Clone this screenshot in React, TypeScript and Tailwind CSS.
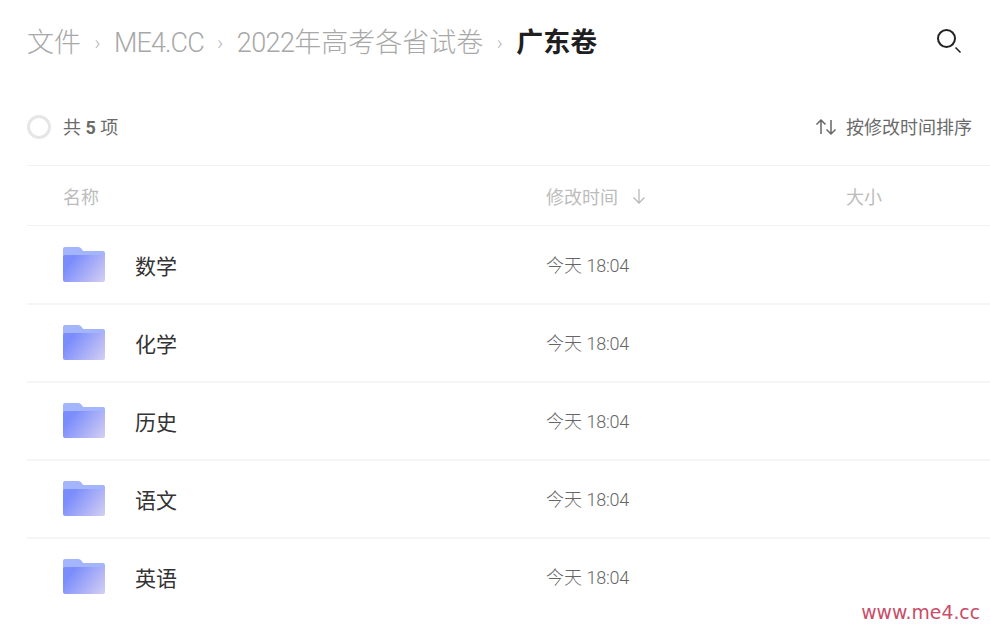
import React from "react";

const folders = ["数学", "化学", "历史", "语文", "英语"];

const FolderIcon = ({ id }: { id: string }) => (
  <svg width="42" height="36" viewBox="0 0 42 36" fill="none">
    <defs>
      <linearGradient id={`body-${id}`} x1="0" y1="0.35" x2="1" y2="0.85">
        <stop offset="0.1" stopColor="#7B8DFB" />
        <stop offset="1" stopColor="#CFCBF3" />
      </linearGradient>
    </defs>
    <path
      d="M0 2a2 2 0 0 1 2-2h13c2 0 3 1 4 2.500c.6 1 1.400 1.500 2.500 1.500H40a2 2 0 0 1 2 2v6H0z"
      fill="#A3B5FC"
    />
    <path
      d="M0 10a2 2 0 0 1 2-2h38a2 2 0 0 1 2 2V33a2 2 0 0 1-2 2H2a2 2 0 0 1-2-2z"
      fill={`url(#body-${id})`}
    />
  </svg>
);

const Sep = () => <span className="w-[33px] text-center text-[20px] font-light text-[#b8b8b8]">›</span>;

export default function App() {
  return (
    <div
      className="relative h-[628px] w-[990px] overflow-hidden bg-white pl-[27px]"
      style={{ fontFamily: 'Roboto, "Noto Sans CJK SC", sans-serif' }}
    >
      {/* Header */}
      <div className="flex h-[85px] items-center justify-between pr-[27px]">
        <div className="flex items-center text-[27px] font-light leading-[36px] text-[#a8a8a8]">
          <span>文件</span>
          <Sep />
          <span className="tracking-[-0.9px]">ME4.CC</span>
          <Sep />
          <span>
            <span className="tracking-[-0.6px]">2022</span>年高考各省试卷
          </span>
          <Sep />
          <span className="font-bold text-[#1f1f1f]">广东卷</span>
        </div>
        <svg width="28" height="28" viewBox="0 0 28 28" fill="none" stroke="#222" className="mt-[-3px]">
          <circle cx="11.500" cy="11.500" r="8.500" strokeWidth="2" />
          <path d="M20.500 20.500l5 5" strokeWidth="1.600" />
        </svg>
      </div>

      {/* Toolbar */}
      <div className="flex h-[81px] items-center justify-between border-b border-[#f2f2f2] pr-[18px]">
        <div className="mt-1 flex items-center text-[18px] text-[#6a6a6a]">
          <span className="h-6 w-6 rounded-full border-[3px] border-[#e6e6e6]" />
          <span className="ml-3">
            共 <b>5</b> 项
          </span>
        </div>
        <div className="mt-1 flex items-center text-[18px] text-[#6a6a6a]">
          <svg width="22" height="20" viewBox="0 0 22 20" fill="none" stroke="#666" strokeWidth="1.500">
            <path d="M6 17V3M1.500 7.500L6 3l4.500 4.500M16 3v14M11.500 12.500L16 17l4.500-4.500" />
          </svg>
          <span className="ml-[9px]">按修改时间排序</span>
        </div>
      </div>

      {/* Table head */}
      <div className="flex h-[60px] items-center border-b border-[#f2f2f2] pl-9 text-[18px] text-[#bcbcbc]">
        <span className="mt-1 w-[483px]">名称</span>
        <span className="flex w-[300px] items-center gap-[14px]">
          <span className="mt-1">修改时间</span>
          <svg width="14" height="16" viewBox="0 0 14 16" fill="none" stroke="#b8b8b8" strokeWidth="1.300">
            <path d="M7 1v14M1.500 9.500L7 15l5.500-5.500" />
          </svg>
        </span>
        <span className="mt-1">大小</span>
      </div>

      {/* Rows */}
      <div className="pt-px">
        {folders.map((name) => (
          <div key={name} className="flex h-[78px] items-center border-b-2 border-[#f5f5f5] pl-9 last:border-transparent">
            <div className="flex w-[483px] items-center">
              <FolderIcon id={name} />
              <span className="ml-[30px] mt-[6px] text-[21px] text-[#333]">{name}</span>
            </div>
            <span className="text-[18px] font-light text-[#666]">
              今天 <span className="tracking-[-0.2px]">18:04</span>
            </span>
          </div>
        ))}
      </div>

      {/* Watermark */}
      <span
        className="absolute right-[10px] top-[602px] text-[18.800px] leading-[22px] text-[#c94c68]"
        style={{ fontFamily: '"DejaVu Sans", sans-serif' }}
      >
        www.me4.cc
      </span>
    </div>
  );
}
